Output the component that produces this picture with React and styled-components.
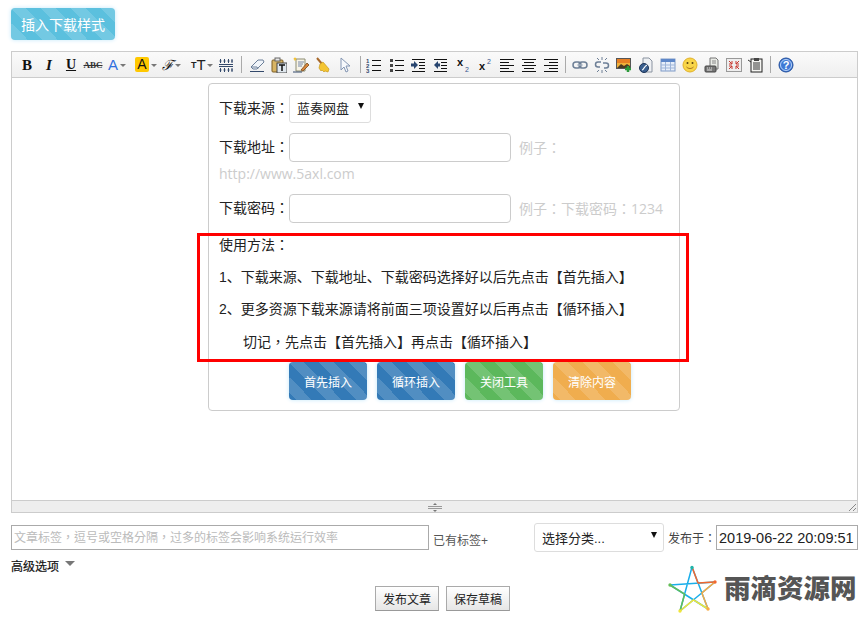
import React from "react"
import styled, { createGlobalStyle } from "styled-components"

const GlobalStyle = createGlobalStyle`
    html, body {
        margin: 0;
        padding: 0;
        background: #fff;
    }
    body {
        font-family: "Liberation Sans", "Noto Sans CJK SC", sans-serif;
        font-size: 14px;
        color: #333;
    }
`

const Page = styled.div`
    position: relative;
    width: 865px;
    height: 617px;
    overflow: hidden;
    padding: 8px 7px 0 11px;
    box-sizing: border-box;
`

const stripes = `linear-gradient(45deg, rgba(255,255,255,.15) 25%, transparent 25%, transparent 50%, rgba(255,255,255,.15) 50%, rgba(255,255,255,.15) 75%, transparent 75%, transparent)`

const StripeButton = styled.button`
    width: ${props => props.$width || 78}px;
    height: ${props => props.$height || 38}px;
    padding: 0;
    border: 0;
    border-radius: 4px;
    color: #fff;
    font-family: inherit;
    font-size: ${props => props.$size || 12}px;
    background-color: ${props => props.$color};
    background-image: ${stripes};
    background-size: 30px 30px;
    box-shadow: 0 0 4px #c4e8fb;
`

const Editor = styled.div`
    margin-top: 11px;
    height: 462px;
    border: 1px solid #ccc;
    box-sizing: border-box;
    display: flex;
    flex-direction: column;
`

const Toolbar = styled.div`
    height: 25px;
    flex: none;
    display: flex;
    align-items: center;
    padding-left: 4px;
    background: linear-gradient(#fafafa, #efefef);
    border-bottom: 1px solid #ccc;
`

const Tool = styled.div`
    width: ${props => props.$width || 22}px;
    height: 22px;
    flex: none;
    display: flex;
    align-items: center;
    justify-content: ${props => (props.$left ? "flex-start" : "center")};
    padding-left: ${props => props.$left || 0}px;
    box-sizing: border-box;
    color: #111;
`

const Glyph = styled.span`
    font-family: ${props => props.$family || '"Liberation Serif", serif'};
    font-size: ${props => props.$size || 13}px;
    font-weight: ${props => props.$weight || 700};
    font-style: ${props => (props.$italic ? "italic" : "normal")};
    text-decoration: ${props => props.$line || "none"};
    color: ${props => props.$color || "#111"};
    background: ${props => props.$bg || "transparent"};
    border-radius: 2px;
    line-height: ${props => props.$height || 16}px;
    width: ${props => props.$box || "auto"};
    text-align: center;
`

const Caret = styled.i`
    width: 0;
    height: 0;
    margin-left: ${props => props.$gap || 2}px;
    margin-top: 2px;
    border-left: 3px solid transparent;
    border-right: 3px solid transparent;
    border-top: 3px solid #777;
`

const Sep = styled.div`
    width: 1px;
    height: 17px;
    flex: none;
    margin: 0 ${props => props.$right}px 0 ${props => props.$left}px;
    background: #aaa;
`

const Content = styled.div`
    flex: 1;
    padding: 5px 0 0 196px;
`

const Panel = styled.div`
    width: 472px;
    box-sizing: border-box;
    height: 328px;
    padding: 10px;
    border: 1px solid #ccc;
    border-radius: 4px;
    color: #222;
`

const Row = styled.div`
    margin-bottom: ${props => props.$gap ?? 10}px;
    line-height: 21px;
`

const Label = styled.span`
    display: inline-block;
    width: 70px;
    margin-bottom: 2px;
    vertical-align: middle;
`

// centred full-width punctuation, as the original font draws it
const Punct = styled.span`
    font-family: "Noto Sans CJK TC", sans-serif;
`

const FakeSelect = styled.div`
    display: inline-flex;
    align-items: center;
    justify-content: space-between;
    vertical-align: middle;
    box-sizing: border-box;
    width: ${props => props.$width}px;
    height: 29px;
    padding: 0 6px 0 7px;
    border: 1px solid #ddd;
    border-radius: 3px;
    background: #fff;
    color: #222;
    font-size: 13px;
`

const ArrowDown = styled.i`
    width: 0;
    height: 0;
    margin-bottom: 5px;
    border-left: 3.500px solid transparent;
    border-right: 3.500px solid transparent;
    border-top: 6px solid #111;
`

const TextInput = styled.input`
    display: inline-block;
    vertical-align: middle;
    box-sizing: border-box;
    width: 222px;
    height: 29px;
    margin-right: 8px;
    border: 1px solid #ccc;
    border-radius: 4px;
    background: #fff;
`

const Hint = styled.span`
    color: #ccc;
    font-family: "Open Sans", "Noto Sans CJK SC", sans-serif;
    font-size: 14px;
    vertical-align: middle;
`

const HintLine = styled.div`
    color: #ccc;
    font-family: "Open Sans", sans-serif;
    font-size: 14px;
    line-height: 23px;
`

const Usage = styled.div`
    margin-top: 5px;
    line-height: 32px;
    color: #222;
`

const UsageLine = styled.div`
    padding-left: ${props => props.$indent || 0}px;
`

const Actions = styled.div`
    display: flex;
    gap: 10px;
    margin: 4px 0 0 70px;
`

const RedFrame = styled.div`
    position: absolute;
    left: 197px;
    top: 233px;
    width: 492px;
    height: 129px;
    box-sizing: border-box;
    border: 3px solid #f00;
`

const ResizeBar = styled.div`
    height: 11px;
    flex: none;
    display: flex;
    align-items: center;
    justify-content: center;
    position: relative;
    background: #eee;
    border-top: 1px solid #ccc;
`

const Corner = styled.svg`
    position: absolute;
    right: 0;
    bottom: 0;
`

const MetaRow = styled.div`
    display: flex;
    align-items: center;
    height: 29px;
    margin-top: 10px;
    font-size: 12px;
    color: #555;
`

const TagInput = styled.input`
    width: 418px;
    height: 25px;
    box-sizing: border-box;
    padding: 0 2px 3px;
    border: 1px solid #aaa;
    border-radius: 0;
    font-family: "Noto Sans CJK TC", sans-serif;
    font-size: 12px;
    &::placeholder {
        color: #bbb;
        opacity: 1;
    }
`

const TagsLink = styled.span`
    margin: 3px 45px 0 4px;
    width: 56px;
    white-space: nowrap;
`

const PublishLabel = styled.span`
    margin: 0 0 0 4px;
    width: 48px;
    color: #444;
    white-space: nowrap;
`

const DateInput = styled.input`
    width: 142px;
    height: 25px;
    box-sizing: border-box;
    padding: 0 2px;
    border: 1px solid #aaa;
    border-radius: 0;
    font-family: "Liberation Sans", sans-serif;
    font-size: 14.500px;
    color: #222;
`

const Advanced = styled.div`
    display: flex;
    align-items: center;
    gap: 6px;
    height: 16px;
    margin-top: 5px;
    font-size: 12px;
    color: #111;
    -webkit-text-stroke: 0.2px #111;
`

const AdvancedCaret = styled.i`
    width: 0;
    height: 0;
    margin-bottom: 3px;
    border-left: 5px solid transparent;
    border-right: 5px solid transparent;
    border-top: 5px solid #777;
`

const SubmitRow = styled.div`
    display: flex;
    gap: 7px;
    margin: 13px 0 0 364px;
`

const SubmitButton = styled.button`
    width: 64px;
    height: 25px;
    padding: 0;
    border: 1px solid #aaa;
    border-bottom-color: #999;
    background: linear-gradient(#fff, #e6e6e6);
    font-family: inherit;
    font-size: 12px;
    color: #222;
`

const Brand = styled.div`
    position: absolute;
    left: 668px;
    top: 565px;
    display: flex;
    align-items: center;
    gap: 6px;
`

const BrandName = styled.span`
    font-family: "Noto Sans CJK SC", sans-serif;
    font-size: 26.500px;
    font-weight: 900;
    color: #555;
    line-height: 34px;
    margin-top: -4px;
    white-space: nowrap;
`

const Svg = ({ children, w = 16, h = 16 }) => (
    <svg width={w} height={h} viewBox={`0 0 ${w} ${h}`}>{children}</svg>
)

const Lines = ({ rows, color = "#111" }) => (
    <>
        {rows.map(([x1, x2, y], i) => (
            <rect key={i} x={x1} y={y} width={x2 - x1} height="1" fill={color} />
        ))}
    </>
)

const TableGrid = () => (
    <Svg>
        <Lines color="#33496b" rows={[[1, 15, 7], [1, 15, 9]]} />
        <path d="M2.500 2v4M6.500 2v4M10.500 2v4M14 2v4M2.500 11v4M6.500 11v4M10.500 11v4M14 11v4M1.500 4h2M5.500 4h2M9.500 4h2M13 4h2M1.500 13h2M5.500 13h2M9.500 13h2M13 13h2" stroke="#33496b" fill="none" />
    </Svg>
)

const Eraser = () => (
    <Svg>
        <path d="M2 10 9 3h5l1 2-7 7H4z" fill="#f1f5fa" stroke="#6b7f99" />
        <path d="M2 10h6l1 2" fill="none" stroke="#6b7f99" />
        <path d="M1 14.500h14" stroke="#33496b" />
    </Svg>
)

const PasteText = () => (
    <Svg>
        <rect x="1" y="3" width="11" height="12" rx="1" fill="#d8b463" stroke="#7b5d24" />
        <rect x="4" y="1" width="5" height="3" fill="#e8e8e8" stroke="#666" />
        <rect x="6" y="6" width="10" height="10" fill="#dfe7ee" stroke="#444" />
        <path d="M8 8h6M11 8v6" stroke="#111" strokeWidth="1.500" fill="none" />
    </Svg>
)

const PasteWord = () => (
    <Svg>
        <path d="M3 2h9v12H3z" fill="#f7f3e6" stroke="#8c8c70" />
        <path d="M0 15h9" stroke="#33496b" />
        <path d="M5 5h6M5 7h5M5 9h4" stroke="#7788aa" />
        <path d="M1 1l2 2M1 3l2-2" stroke="#f3c233" strokeWidth="1.500" />
        <path d="M8 13l6-7 2 2-6 6z" fill="#d8863b" stroke="#774a20" strokeWidth=".8" />
    </Svg>
)

const Broom = () => (
    <Svg>
        <path d="M2 1l5 6" stroke="#a8692c" strokeWidth="2" />
        <path d="M5 7l3-2 6 7-1 3-3-1-1 1-2-2-1 1-2-3z" fill="#f4c533" stroke="#c99b1e" strokeWidth=".7" />
    </Svg>
)

const Cursor = () => (
    <Svg>
        <path d="M4 1v12l3-3 2 5 2-1-2-5h4z" fill="#f7f9fc" stroke="#8496b3" />
    </Svg>
)

const OrderedList = () => (
    <Svg w={18}>
        <text x="0" y="6" fontSize="6" fontFamily="Liberation Sans" fontWeight="700" fill="#33496b">1</text>
        <text x="0" y="11" fontSize="6" fontFamily="Liberation Sans" fontWeight="700" fill="#33496b">2</text>
        <text x="0" y="16" fontSize="6" fontFamily="Liberation Sans" fontWeight="700" fill="#33496b">3</text>
        <Lines rows={[[6, 15, 3], [6, 15, 8], [6, 15, 13]]} />
    </Svg>
)

const BulletList = () => (
    <Svg>
        <rect x="1" y="2" width="3" height="3" fill="#444" />
        <rect x="1" y="7" width="3" height="3" fill="#444" />
        <rect x="1" y="12" width="3" height="3" fill="#444" />
        <Lines rows={[[6, 15, 3], [6, 15, 8], [6, 15, 13]]} />
    </Svg>
)

const Indent = ({ out }) => (
    <Svg>
        <Lines rows={[[1, 14, 2], [8, 14, 5], [8, 14, 8], [8, 14, 11], [1, 14, 14]]} />
        {out
            ? <path d="M1 8l4-4v2.500h2v3H5V12z" fill="#27456f" />
            : <path d="M7 8 3 4v2.500H0v3h3V12z" fill="#27456f" />}
    </Svg>
)

const Script = ({ up }) => (
    <Svg>
        <text x="2" y={up ? 13 : 9} fontSize="11" fontWeight="700" fontFamily="Liberation Sans" fill="#111">x</text>
        <text x="10" y={up ? 7 : 15} fontSize="7" fontFamily="Liberation Sans" fill="#33558c">2</text>
    </Svg>
)

const Align = ({ kind }) => {
    const rows = {
        left: [[1, 15, 2], [1, 10, 5], [1, 15, 8], [1, 10, 11], [1, 15, 14]],
        center: [[1, 15, 2], [3, 13, 5], [1, 15, 8], [3, 13, 11], [1, 15, 14]],
        right: [[1, 15, 2], [6, 15, 5], [1, 15, 8], [6, 15, 11], [1, 15, 14]],
    }
    return <Svg><Lines rows={rows[kind]} /></Svg>
}

const LinkIcon = () => (
    <Svg>
        <rect x="1" y="5" width="8" height="6" rx="3" fill="none" stroke="#6d7f96" strokeWidth="1.500" />
        <rect x="7" y="5" width="8" height="6" rx="3" fill="none" stroke="#6d7f96" strokeWidth="1.500" />
        <path d="M5 8h6" stroke="#aab6c5" />
    </Svg>
)

const Unlink = () => (
    <Svg>
        <path d="M7 5H4a2.500 2.500 0 0 0 0 5h2M9 6h3a2.500 2.500 0 0 1 0 5h-2" fill="none" stroke="#6d7f96" strokeWidth="1.500" />
        <path d="M8 0v3M8 13v3M3 1l2 2M13 1l-2 2M3 15l2-2M13 15l-2-2" stroke="#6d7f96" />
    </Svg>
)

const ImageAdd = () => (
    <Svg>
        <rect x="0.500" y="1.500" width="14" height="10" fill="#f0b13a" stroke="#555" />
        <rect x="1" y="2" width="13" height="4" fill="#e77f24" />
        <path d="M1 11l4-4 3 2 3-2 3 2v2z" fill="#4a3a22" />
        <path d="M12 9v6M9 12h6" stroke="#2c9a3b" strokeWidth="2.500" />
    </Svg>
)

const FlashDoc = () => (
    <Svg>
        <path d="M5 1h6l3 3v11H5z" fill="#eef0f3" stroke="#8a93a0" />
        <circle cx="6" cy="11" r="4.500" fill="#3a5f8f" stroke="#1f3557" />
        <path d="M4 13c2 0 2-4 5-5" stroke="#fff" strokeWidth="1.200" fill="none" />
    </Svg>
)

const TableIcon = () => (
    <Svg>
        <rect x="1" y="2" width="14" height="12" fill="#e6eefa" stroke="#7f9ac6" />
        <rect x="1" y="2" width="14" height="3" fill="#5e87c8" />
        <path d="M1 8h14M1 11h14M5.500 5v9M10.500 5v9" stroke="#9db4d8" />
    </Svg>
)

const Smile = () => (
    <Svg>
        <circle cx="8" cy="8" r="7" fill="#f8d548" stroke="#e2b12a" />
        <circle cx="5.500" cy="6" r="1" fill="#5a4210" />
        <circle cx="10.500" cy="6" r="1" fill="#5a4210" />
        <path d="M4.500 10c2 2 5 2 7 0" stroke="#a5701a" fill="none" />
    </Svg>
)

const DocPrint = () => (
    <Svg>
        <path d="M6 1h6l2 2v9H6z" fill="#e9ebe6" stroke="#777" />
        <path d="M8 4h4M8 6h4" stroke="#888" />
        <rect x="1" y="9" width="11" height="6" rx="1" fill="#777" stroke="#444" />
        <path d="M3 11h1M5 11h1M7 11h1M3 13h5" stroke="#ddd" />
    </Svg>
)

const Fullscreen = () => (
    <Svg>
        <rect x="0.500" y="1.500" width="15" height="13" fill="#eee" stroke="#999" />
        <path d="M3 4l3 3M6 4v3H3M13 4l-3 3M10 4v3h3M3 12l3-3M6 12V9H3M13 12l-3-3M10 12V9h3" stroke="#c8372d" fill="none" />
    </Svg>
)

const Template = () => (
    <Svg>
        <rect x="3" y="2" width="11" height="13" fill="#f5f5f2" stroke="#222" />
        <rect x="6" y="1" width="5" height="3" fill="#444" />
        <path d="M5 6h7M5 8h7M5 10h7M5 12h7" stroke="#333" />
        <path d="M0 3l3 2" stroke="#333" />
    </Svg>
)

const Help = () => (
    <Svg>
        <circle cx="8" cy="8" r="7" fill="#3e78d6" stroke="#234f9c" />
        <circle cx="8" cy="8" r="5.500" fill="none" stroke="#b8d2f6" />
        <text x="8" y="12" textAnchor="middle" fontSize="11" fontWeight="700" fontFamily="Liberation Sans" fill="#fff">?</text>
    </Svg>
)

// pentagram in blue, with the outer edges recoloured going round the star
const Star = () => (
    <svg width="50" height="48" viewBox="0 0 50 48">
        <g fill="none" strokeWidth="1.500" strokeLinecap="round" strokeLinejoin="round">
            <path d="M24 2 12 46M24 2 40 44M2 20 47 17M2 20 40 44M47 17 12 46" stroke="#19aeea" />
            <path d="M24 2 30 18 47 17" stroke="#f2672e" />
            <path d="M47 17 33.900 27.900 40 44" stroke="#f7ab45" />
            <path d="M40 44 25.500 34.800 12 46" stroke="#f0e53a" />
            <path d="M12 46 16.600 29.200 2 20" stroke="#63bd57" />
        </g>
        <circle cx="24" cy="2.500" r="1.700" fill="#1fb5a8" />
        <circle cx="47" cy="17" r="1.700" fill="#f2672e" />
        <circle cx="40" cy="44" r="1.700" fill="#f7ab45" />
        <circle cx="12" cy="46" r="1.700" fill="#f0e53a" />
        <circle cx="2" cy="20" r="1.700" fill="#63bd57" />
    </svg>
)

const simpleTools = [
    <Eraser />, <PasteText />, <PasteWord />, <Broom />, <Cursor />,
]
const listTools = [
    <OrderedList />, <BulletList />, <Indent />, <Indent out />, <Script />, <Script up />,
    <Align kind="left" />, <Align kind="center" />, <Align kind="right" />,
]
const insertTools = [
    <LinkIcon />, <Unlink />, <ImageAdd />, <FlashDoc />, <TableIcon />, <Smile />,
    <DocPrint />, <Fullscreen />, <Template />,
]

const App = () => {
    return (
        <Page>
            <GlobalStyle />
            <StripeButton $color="#5bc0de" $width={104} $height={32} $size={14}>插入下载样式</StripeButton>
            <Editor>
                <Toolbar>
                    <Tool><Glyph $size={15} $weight={900}>B</Glyph></Tool>
                    <Tool><Glyph $size={15} $italic>I</Glyph></Tool>
                    <Tool><Glyph $size={14} $line="underline">U</Glyph></Tool>
                    <Tool><Glyph $size={9} $weight={700} $color="#333" $line="line-through">ABC</Glyph></Tool>
                    <Tool $width={26} $left={4}>
                        <Glyph $family='"Liberation Sans", sans-serif' $size={15} $weight={400} $color="#2f6fde">A</Glyph>
                        <Caret />
                    </Tool>
                    <Tool $width={28} $left={5}>
                        <Glyph $family='"Liberation Sans", sans-serif' $size={14} $weight={400} $bg="#ffc800" $box="14px" $height={15}>A</Glyph>
                        <Caret $gap={2} />
                    </Tool>
                    <Tool $width={28} $left={4}>
                        <Glyph $family='"DejaVu Serif", serif' $size={14} $weight={400} $italic>ℱ</Glyph>
                        <Caret $gap={1} />
                    </Tool>
                    <Tool $width={29} $left={5}>
                        <Glyph $family='"Liberation Sans", sans-serif' $size={9} $color="#222">T</Glyph>
                        <Glyph $family='"Liberation Sans", sans-serif' $size={15} $weight={400} $color="#222">T</Glyph>
                        <Caret $gap={1} />
                    </Tool>
                    <Tool><TableGrid /></Tool>
                    <Sep $left={4} $right={4} />
                    {simpleTools.map((icon, i) => <Tool key={i}>{icon}</Tool>)}
                    <Sep $left={4} $right={3} />
                    {listTools.map((icon, i) => <Tool key={i}>{icon}</Tool>)}
                    <Sep $left={3} $right={3} />
                    {insertTools.map((icon, i) => <Tool key={i}>{icon}</Tool>)}
                    <Sep $left={3} $right={4} />
                    <Tool><Help /></Tool>
                </Toolbar>
                <Content>
                    <Panel>
                        <Row>
                            <Label>下载来源<Punct>：</Punct></Label>
                            <FakeSelect $width={82}>蓝奏网盘<ArrowDown /></FakeSelect>
                        </Row>
                        <Row $gap={9}>
                            <Label>下载地址<Punct>：</Punct></Label>
                            <TextInput />
                            <Hint>例子<Punct>：</Punct></Hint>
                            <HintLine>http://www.5axl.com</HintLine>
                        </Row>
                        <Row $gap={0}>
                            <Label>下载密码<Punct>：</Punct></Label>
                            <TextInput />
                            <Hint>例子<Punct>：</Punct>下载密码<Punct>：</Punct>1234</Hint>
                        </Row>
                        <Usage>
                            <UsageLine>使用方法<Punct>：</Punct></UsageLine>
                            <UsageLine>1、下载来源、下载地址、下载密码选择好以后先点击【首先插入】</UsageLine>
                            <UsageLine>2、更多资源下载来源请将前面三项设置好以后再点击【循环插入】</UsageLine>
                            <UsageLine $indent={24}>切记<Punct>，</Punct>先点击【首先插入】再点击【循环插入】</UsageLine>
                        </Usage>
                        <Actions>
                            <StripeButton $color="#337ab7">首先插入</StripeButton>
                            <StripeButton $color="#337ab7">循环插入</StripeButton>
                            <StripeButton $color="#5cb85c">关闭工具</StripeButton>
                            <StripeButton $color="#f0ad4e">清除内容</StripeButton>
                        </Actions>
                    </Panel>
                </Content>
                <ResizeBar>
                    <svg width="16" height="10" viewBox="0 0 16 10">
                        <path d="M1 4.500h14M1 6.500h14" stroke="#999" />
                        <path d="M6 3l2-2 2 2zM6 8l2 2 2-2z" fill="#777" />
                    </svg>
                    <Corner width="9" height="9" viewBox="0 0 9 9">
                        <path d="M1 8l7-7M5 8l3-3" stroke="#888" />
                    </Corner>
                </ResizeBar>
            </Editor>
            <MetaRow>
                <TagInput placeholder="文章标签，逗号或空格分隔，过多的标签会影响系统运行效率" />
                <TagsLink>已有标签+</TagsLink>
                <FakeSelect $width={130}>选择分类...<ArrowDown /></FakeSelect>
                <PublishLabel>发布于<Punct>：</Punct></PublishLabel>
                <DateInput defaultValue="2019-06-22 20:09:51" />
            </MetaRow>
            <Advanced>高级选项<AdvancedCaret /></Advanced>
            <SubmitRow>
                <SubmitButton>发布文章</SubmitButton>
                <SubmitButton>保存草稿</SubmitButton>
            </SubmitRow>
            <RedFrame />
            <Brand>
                <Star />
                <BrandName>雨滴资源网</BrandName>
            </Brand>
        </Page>
    )
}

export default App
